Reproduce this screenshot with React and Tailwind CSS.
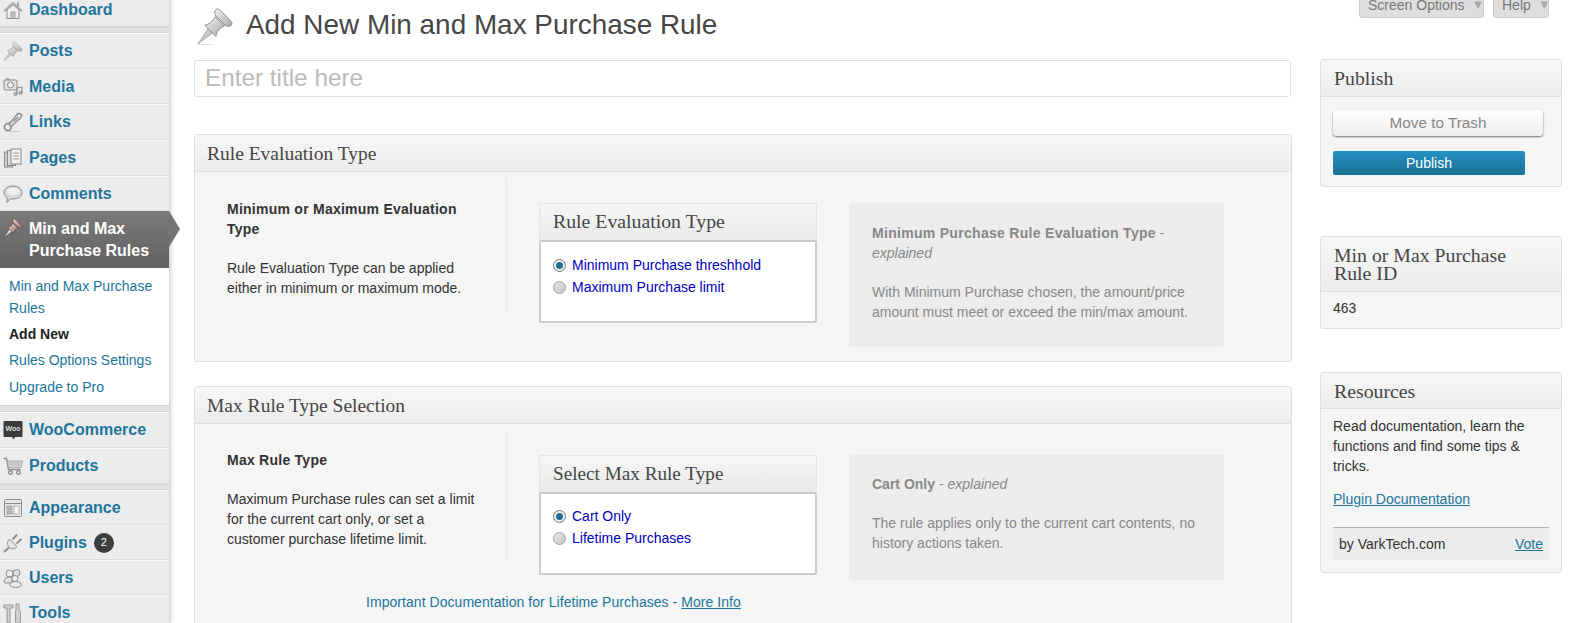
import React from "react";

const sans = "font-['Liberation_Sans',Arial,sans-serif]";
const serif = "font-['Liberation_Serif',Georgia,serif]";

function Home() {
  return (
    <svg viewBox="0 0 20 20" className="w-5 h-5">
      <path d="M4 10v8.500h12V10L10 4.500z" fill="#eeeeee" stroke="#8f8f8f" />
      <path d="M.8 10.500 10 2l9.200 8.500-1.200 1L10 4.300 2 11.500z" fill="#b5b5b5" stroke="#858585" strokeWidth=".5" />
      <rect x="8" y="12" width="4" height="6.500" fill="#c4c4c4" stroke="#8f8f8f" strokeWidth=".7" />
      <rect x="14" y="2.500" width="2" height="4" fill="#a0a0a0" />
    </svg>
  );
}

function Pin({ dark, id }) {
  return (
    <svg viewBox="0 0 40 40" className="w-full h-full">
      <defs>
        <linearGradient id={id} x1="0" y1="0" x2="1" y2="1">
          <stop offset="0" stopColor={dark ? "#f0d5d0" : "#f4f4f4"} />
          <stop offset="1" stopColor={dark ? "#9a6f6a" : "#a8a8a8"} />
        </linearGradient>
      </defs>
      <path d="M2 39 14 21l5 5z" fill={dark ? "#e8e8e8" : "#c8c8c8"} stroke={dark ? "#444" : "#9a9a9a"} strokeWidth=".8" />
      <path d="M2 39.500h16" stroke="#dddddd" strokeWidth="1" opacity={dark ? 0 : 1} />
      <path d="M9 19c5-.5 9-4 11-9l10 10c-5 2-8.500 6-9 11z" fill={`url(#${id})`} stroke={dark ? "#3a2a2a" : "#8c8c8c"} strokeWidth="1" />
      <path d="M21 2.500c-1.500 1.500-2 4 0 7l9.500 9.500c3 2 5.500 1.500 7 0 1-1.500 0-3.500-2-5.500L26 4c-2-1.800-3.500-2.500-5-1.500z" fill={`url(#${id})`} stroke={dark ? "#3a2a2a" : "#8c8c8c"} strokeWidth="1" />
    </svg>
  );
}

function Media() {
  return (
    <svg viewBox="0 0 20 20" className="w-5 h-5" fill="none" stroke="#8a8a8a">
      <rect x="1" y="3" width="13" height="10" rx="1" fill="#e2e2e2" />
      <circle cx="7.500" cy="8" r="3" fill="#f2f2f2" />
      <path d="M3 3V1.800h3V3" />
      <path d="M14 11v6M19 10v6M14 11l5-1" strokeWidth="1.200" />
      <circle cx="12.500" cy="17" r="1.500" fill="#c5c5c5" />
      <circle cx="17.500" cy="16" r="1.500" fill="#c5c5c5" />
    </svg>
  );
}

function Links() {
  return (
    <svg viewBox="0 0 20 20" className="w-5 h-5" fill="none">
      <path d="M5 18.500C2.500 18.500 1 16.500 1.500 14.500c.4-2 2.500-3.500 4.500-3l1.500-1.500M8 14.500c.5 2.500-1 4-3 4" stroke="#8a8a8a" strokeWidth="1.600" />
      <path d="M6 12.500 8 14.500 17.500 6c1.500-1.500 1.500-3 .5-4s-2.800-1-4 .3L6 12.500z" fill="#e4e4e4" stroke="#8a8a8a" strokeWidth="1.300" />
      <path d="M10.500 9.500 15 5" stroke="#8a8a8a" strokeWidth="1.200" />
      <path d="M3 19.500h14" stroke="#c8c8c8" />
    </svg>
  );
}

function Pages() {
  return (
    <svg viewBox="0 0 20 20" className="w-5 h-5" stroke="#8a8a8a">
      <rect x="1.500" y="4" width="8" height="15" fill="#cfcfcf" />
      <rect x="4.500" y="2.500" width="8" height="15" fill="#dcdcdc" />
      <rect x="8" y="1" width="10" height="15" fill="#f0f0f0" />
      <path d="M10 5h6M10 8h6M10 11h6" strokeWidth=".8" />
    </svg>
  );
}

function Comments() {
  return (
    <svg viewBox="0 0 20 20" className="w-5 h-5">
      <path d="M10 2c5 0 9 2.700 9 6.500S15 15 10 15c-1 0-2 0-2.800-.2L4 18.500l.3-4.700C2.200 12.600 1 10.700 1 8.500 1 4.700 5 2 10 2z" fill="#d9d9d9" stroke="#8a8a8a" />
      <ellipse cx="10" cy="7.500" rx="6.500" ry="3.500" fill="#efefef" />
    </svg>
  );
}

function Woo() {
  return (
    <svg viewBox="0 0 20 20" className="w-5 h-5">
      <path d="M1.500 1h17a1 1 0 0 1 1 1v14a1 1 0 0 1-1 1H12l-1.500 2.500L9 17H1.500a1 1 0 0 1-1-1V2a1 1 0 0 1 1-1z" fill="#3b3b3b" />
      <text x="10" y="11" textAnchor="middle" fontSize="7" fontWeight="bold" fill="#dddddd">Woo</text>
    </svg>
  );
}

function Cart() {
  return (
    <svg viewBox="0 0 20 20" className="w-5 h-5">
      <path d="M.5 2.500h3l2 11h12" fill="none" stroke="#8a8a8a" strokeWidth="1.300" />
      <path d="M4.500 5h15l-1.500 6.500H5.500z" fill="#d8d8d8" stroke="#9a9a9a" strokeWidth=".7" />
      <path d="M6 7h12M6.500 9h11" stroke="#a8a8a8" strokeWidth=".7" />
      <circle cx="7.500" cy="16.500" r="2" fill="#cfcfcf" stroke="#777" />
      <circle cx="15.500" cy="16.500" r="2" fill="#cfcfcf" stroke="#777" />
    </svg>
  );
}

function Appearance() {
  return (
    <svg viewBox="0 0 20 20" className="w-5 h-5" stroke="#8a8a8a">
      <rect x="1.500" y="1.500" width="17" height="17" rx="1" fill="#e6e6e6" />
      <path d="M2 5.500h16" />
      <rect x="4" y="8" width="5" height="3.500" fill="#bcbcbc" strokeWidth=".6" />
      <rect x="4" y="13" width="5" height="3" fill="#bcbcbc" strokeWidth=".6" />
      <rect x="11" y="8" width="5" height="8" fill="#fafafa" strokeWidth=".6" />
    </svg>
  );
}

function Plug() {
  return (
    <svg viewBox="0 0 20 20" className="w-5 h-5" fill="none" stroke="#8f8f8f">
      <path d="M6.500 6 14 13.500c-2.500 2.800-5.500 3-7.800.8S3.800 8.500 6.500 6z" fill="#e2e2e2" />
      <path d="M9.500 6.500 14 1.500M13.500 10.500 18.500 6" strokeWidth="2" />
      <path d="M6 14.500 1 19" strokeWidth="2" />
    </svg>
  );
}

function People() {
  return (
    <svg viewBox="0 0 20 20" className="w-5 h-5" stroke="#8a8a8a">
      <circle cx="6.500" cy="5.500" r="3.500" fill="#ececec" />
      <circle cx="13.500" cy="5" r="3.500" fill="#dedede" />
      <path d="M1 14c0-3 2-5 5-5 1 0 2 .3 3 1v5H2z" fill="#e2e2e2" />
      <circle cx="12" cy="10.500" r="3" fill="#f2f2f2" />
      <ellipse cx="12.500" cy="16.500" rx="6" ry="3" fill="#e8e8e8" />
    </svg>
  );
}

function Tools() {
  return (
    <svg viewBox="0 0 20 20" className="w-5 h-5" fill="#cfcfcf" stroke="#8a8a8a" strokeWidth=".8">
      <path d="M1 2h9v3H7v15H4V5H1z" />
      <path d="M13 1h3v6l1.500 2v10a1 1 0 0 1-1 1h-3a1 1 0 0 1-1-1V9L13 7z" />
    </svg>
  );
}

function MenuRow({ icon, label, h, badge, last }) {
  return (
    <a href="#" className={`flex items-center ${h} pl-[3px] border-b border-b-[#dcdcdc] border-t border-t-white/80 ${last ? "border-b-0" : ""}`}>
      <span className="w-5 h-5 shrink-0 flex items-center justify-center">{icon}</span>
      <span className="ml-[6px] text-[16px] font-bold leading-5 text-[#21759b]">{label}</span>
      {badge && (
        <span className="ml-[7px] w-5 h-5 rounded-full bg-[#3d3d3d] text-white text-[11px] font-normal flex items-center justify-center">{badge}</span>
      )}
    </a>
  );
}

function Separator({ h }) {
  return <div className={`${h} bg-[#e2e2e2] border-y border-y-[#d4d4d4]`} />;
}

function Sidebar() {
  return (
    <aside className="w-[170px] shrink-0 bg-[#ececec] border-r border-r-[#d9d9d9] shadow-[1px_0_4px_rgba(0,0,0,0.18)] -mt-[8px]">
      <MenuRow icon={<Home />} label="Dashboard" h="h-[35px]" />
      <Separator h="h-[6px]" />
      <MenuRow icon={<span className="w-5 h-5"><Pin id="pin-posts" /></span>} label="Posts" h="h-[36px]" />
      <MenuRow icon={<Media />} label="Media" h="h-[35px]" />
      <MenuRow icon={<Links />} label="Links" h="h-[36px]" />
      <MenuRow icon={<Pages />} label="Pages" h="h-[36px]" />
      <MenuRow icon={<Comments />} label="Comments" h="h-[35px]" />

      <div className="relative h-[57px] bg-gradient-to-b from-[#7a7a7a] to-[#626262] flex items-center pl-[3px]">
        <span className="w-5 h-5 shrink-0 self-start mt-[7px]"><Pin dark id="pin-active" /></span>
        <a href="#" className="ml-[6px] text-[16px] font-bold leading-[22px] text-white">Min and Max<br />Purchase Rules</a>
        <span className="absolute left-full top-0 w-0 h-0 border-y-[18px] border-y-transparent border-l-[11px] border-l-[#747474]" />
      </div>

      <div className="h-[137px] bg-white pl-[9px] pt-[7px] text-[14px] text-[#21759b]">
        <a href="#" className="block leading-[22px]">Min and Max Purchase Rules</a>
        <a href="#" className="block mt-[4px] leading-[22px] font-bold text-[#222]">Add New</a>
        <a href="#" className="block mt-[4px] leading-[22px]">Rules Options Settings</a>
        <a href="#" className="block mt-[5px] leading-[22px]">Upgrade to Pro</a>
      </div>

      <Separator h="h-[7px]" />
      <MenuRow icon={<Woo />} label="WooCommerce" h="h-[36px]" />
      <MenuRow icon={<Cart />} label="Products" h="h-[36px]" />
      <Separator h="h-[6px]" />
      <MenuRow icon={<Appearance />} label="Appearance" h="h-[35px]" />
      <MenuRow icon={<Plug />} label="Plugins" h="h-[35px]" badge="2" />
      <MenuRow icon={<People />} label="Users" h="h-[35px]" />
      <MenuRow icon={<Tools />} label="Tools" h="h-[34px]" last />
    </aside>
  );
}

function Radio({ on }) {
  return (
    <span className={`w-[13px] h-[13px] rounded-full shrink-0 border flex items-center justify-center ${on ? "border-[#777] bg-[#f0f0f0]" : "border-[#a0a0a0] bg-gradient-to-br from-[#e8e8e8] to-[#c4c4c4]"}`}>
      {on && <span className="w-[7px] h-[7px] rounded-full bg-[#1f6f93]" />}
    </span>
  );
}

function SelectBox({ title, titleSize, options, listPad }) {
  return (
    <div className="w-[278px] shrink-0">
      <div className={`h-[37px] pl-[13px] flex items-center bg-gradient-to-b from-[#f6f6f6] to-[#e9e9e9] border border-[#e6e6e6] border-b-0 ${serif} ${titleSize} text-[#464646]`}>{title}</div>
      <div className={`h-[83px] bg-white border-2 border-[#cccccc] rounded-[2px] pl-[12px] ${listPad}`}>
        {options.map((o, i) => (
          <label key={o} className="flex items-center h-[22px] gap-[6px] text-[14px] text-[#0000c0]">
            <Radio on={i === 0} />
            <span>{o}</span>
          </label>
        ))}
      </div>
    </div>
  );
}

function RuleBox({ heading, title, lead, desc, text, selectTitle, titleSize, options, listPad, children, bodyH, noteClass, explainClass }) {
  return (
    <section className={`border border-[#dfdfdf] rounded-[3px] bg-[#f5f5f5] ${sans}`}>
      <h3 className={`h-[37px] pl-[12px] pt-[2px] flex items-center bg-gradient-to-b from-[#f7f7f7] to-[#ececec] border-b border-b-[#dfdfdf] ${serif} text-[19.5px] font-normal text-[#464646]`}>{heading}</h3>
      <div className={`${bodyH} flex items-start pt-[6px]`}>
        <div className={`w-[312px] shrink-0 pl-[32px] pr-[26px] border-r border-r-[#e9e9e9] text-[14px] leading-[20px] text-[#333] ${noteClass}`}>
          <div className="font-bold tracking-[.25px]">{title}</div>
          <p className="mt-[19px]">{lead}</p>
        </div>
        <div className="ml-[32px] mt-[25px]">
          <SelectBox title={selectTitle} titleSize={titleSize} options={options} listPad={listPad} />
        </div>
        <div className={`ml-[32px] mt-[25px] w-[375px] shrink-0 bg-[#ececec] rounded-[2px] pl-[23px] pr-[20px] text-[14px] leading-[20px] text-[#888] ${explainClass}`}>
          {desc}
          <p className="mt-[19px]">{text}</p>
        </div>
      </div>
      {children}
    </section>
  );
}

function SideBox({ title, children, headerClass }) {
  return (
    <section className={`border border-[#dfdfdf] rounded-[3px] bg-[#f5f5f5] ${sans}`}>
      <h3 className={`${headerClass} pl-[13px] flex items-center bg-gradient-to-b from-[#f7f7f7] to-[#ececec] border-b border-b-[#dfdfdf] ${serif} text-[19.8px] leading-[18px] font-normal text-[#464646]`}>{title}</h3>
      {children}
    </section>
  );
}

function TabButton({ label, w }) {
  return (
    <div className={`${w} h-[18px] bg-[#dedede] border border-[#cfcfcf] border-t-0 rounded-b-[3px] flex items-end pl-[8px] gap-[7px] pb-[5px] text-[14px] leading-none text-[#777] overflow-hidden whitespace-nowrap`}>
      <span>{label}</span>
      <span className="text-[13px] text-[#aaa] leading-[14px]">▼</span>
    </div>
  );
}

export default function App() {
  return (
    <div className={`flex h-[623px] overflow-hidden bg-white ${sans}`}>
      <Sidebar />
      <div className="flex-1 min-w-0 pl-[24px]">
        <div className="flex">
          <main className="w-[1098px] shrink-0">
            <div className="h-[60px] flex items-start">
              <span className="w-[38px] h-[38px] mt-[7px] ml-[2px]"><Pin id="pin-title" /></span>
              <h1 className="ml-[12px] mt-[7px] text-[27.9px] leading-9 font-normal text-[#464646]">Add New Min and Max Purchase Rule</h1>
            </div>
            <div className="h-[37px] w-[1097px] border border-[#dfdfdf] rounded-[3px] pl-[10px] pb-[1px] flex items-center text-[24.3px] text-[#bbb]">Enter title here</div>

            <div className="mt-[37px]">
              <RuleBox
                heading="Rule Evaluation Type"
                title="Minimum or Maximum Evaluation Type"
                lead="Rule Evaluation Type can be applied either in minimum or maximum mode."
                selectTitle="Rule Evaluation Type"
                titleSize="text-[19.8px]"
                options={["Minimum Purchase threshhold", "Maximum Purchase limit"]}
                listPad="pt-[12px]"
                bodyH="h-[189px]"
                noteClass="h-[135px] pt-[21px]"
                explainClass="h-[144px] pt-[20px]"
                desc={<div><b className="tracking-[.3px]">Minimum Purchase Rule Evaluation Type</b> - <i>explained</i></div>}
                text="With Minimum Purchase chosen, the amount/price amount must meet or exceed the min/max amount."
              />
            </div>

            <div className="mt-[24px]">
              <RuleBox
                heading="Max Rule Type Selection"
                title="Max Rule Type"
                lead="Maximum Purchase rules can set a limit for the current cart only, or set a customer purchase lifetime limit."
                selectTitle="Select Max Rule Type"
                titleSize="text-[19.2px]"
                options={["Cart Only", "Lifetime Purchases"]}
                listPad="pt-[11px]"
                bodyH="h-[160px]"
                noteClass="h-[131px] pt-[20px]"
                explainClass="h-[125px] pt-[19px]"
                desc={<div><b>Cart Only</b> - <i>explained</i></div>}
                text="The rule applies only to the current cart contents, no history actions taken."
              >
                <div className="pl-[171px] h-[40px] pt-[8px] text-[14px] leading-5 tracking-[.05px] text-[#21759b]">
                  Important Documentation for Lifetime Purchases - <a href="#" className="underline">More Info</a>
                </div>
              </RuleBox>
            </div>
          </main>

          <div className="ml-[28px] w-[242px] shrink-0">
            <div className="h-[59px] flex justify-end gap-[9px] mr-[13px]">
              <TabButton label="Screen Options" w="w-[125px]" />
              <TabButton label="Help" w="w-[56px]" />
            </div>

            <SideBox title="Publish" headerClass="h-[37px]">
              <div className="h-[89px] pl-[12px] pt-[13px]">
                <button className="block w-[210px] h-[26px] rounded-[4px] bg-gradient-to-b from-white to-[#ededed] shadow-[0_1px_2px_rgba(0,0,0,0.55)] text-[15.3px] text-[#888]">Move to Trash</button>
                <button className="block mt-[15px] w-[192px] h-[24px] rounded-[2px] bg-gradient-to-b from-[#2392c5] to-[#1b6f94] text-[14px] text-white">Publish</button>
              </div>
            </SideBox>

            <div className="mt-[49px]">
              <SideBox title={<span>Min or Max Purchase<br />Rule ID</span>} headerClass="h-[55px]">
                <div className="h-[36px] pl-[12px] pb-[3px] flex items-center text-[14px] text-[#333]">463</div>
              </SideBox>
            </div>

            <div className="mt-[43px]">
              <SideBox title="Resources" headerClass="h-[36px]">
                <div className="px-[12px] pt-[7px] pb-[12px] text-[14px] leading-[20px] text-[#333]">
                  <p>Read documentation, learn the functions and find some tips &amp; tricks.</p>
                  <a href="#" className="block mt-[13px] text-[#21759b] underline">Plugin Documentation</a>
                  <div className="mt-[18px] h-[33px] flex items-center justify-between px-[6px] bg-[#ececec] border-t border-t-[#b5b5b5]">
                    <span>by VarkTech.com</span>
                    <a href="#" className="text-[#21759b] underline">Vote</a>
                  </div>
                </div>
              </SideBox>
            </div>
          </div>
        </div>
      </div>
    </div>
  );
}
